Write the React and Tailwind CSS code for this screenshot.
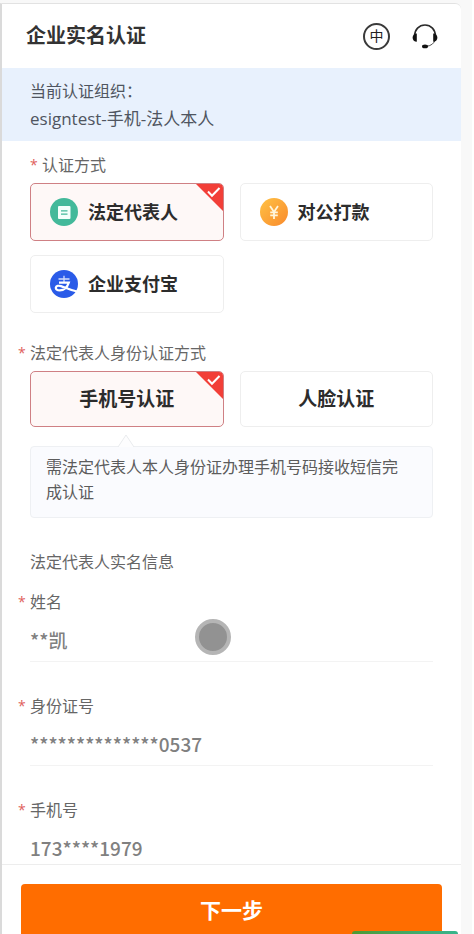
import React, { useState } from 'react';

const LEGAL_METHODS = [
    { id: 'legal', label: '法定代表人', Icon: LegalIcon },
    { id: 'transfer', label: '对公打款', Icon: TransferIcon },
    { id: 'alipay', label: '企业支付宝', Icon: AlipayIcon },
];

const IDENTITY_METHODS = [
    { id: 'phone', label: '手机号认证' },
    { id: 'face', label: '人脸认证' },
];

const FIELDS = [
    { id: 'name', label: '姓名', value: '**凯' },
    { id: 'idcard', label: '身份证号', value: '**************0537' },
    { id: 'mobile', label: '手机号', value: '173****1979' },
];

function LegalIcon() {
    return (
        <svg viewBox="0 0 28 28" className="size-7 shrink-0" aria-hidden="true">
            <circle cx="14" cy="14" r="14" fill="#43b99a" />
            <rect x="8" y="8" width="12.5" height="13" rx="1" fill="#f3fffb" />
            <path d="M11 12.8h6.5M11 16.2h6.5" stroke="#43b99a" strokeWidth="1.3" />
        </svg>
    );
}

function TransferIcon() {
    return (
        <svg viewBox="0 0 28 28" className="size-7 shrink-0" aria-hidden="true">
            <defs>
                <linearGradient id="coin" x1="0" y1="0" x2="1" y2="1">
                    <stop offset="0" stopColor="#ffc245" />
                    <stop offset="1" stopColor="#f98a2c" />
                </linearGradient>
            </defs>
            <circle cx="14" cy="14" r="14" fill="url(#coin)" />
            <path d="M10 8l4 6 4-6M14 14v7M10.2 14.4h7.6M10.2 17.4h7.6" fill="none" stroke="#fff6dc" strokeWidth="1.8" />
        </svg>
    );
}

function AlipayIcon() {
    return (
        <svg viewBox="0 0 28 28" className="size-7 shrink-0" aria-hidden="true">
            <circle cx="14" cy="14" r="14" fill="#2a5be8" />
            <g fill="none" stroke="#fff">
                <path d="M8.500 9h11M14 5.800v6.700" strokeWidth="1.300" opacity="0.800" />
                <path d="M9 12.600h9.800c-1.400 4.200-4.800 7.800-9 7.800-2.800 0-4.200-1.300-4-2.800.3-1.700 2.600-2.300 5.200-1.500 4.200 1.300 8.200 3.700 16 5.400" strokeWidth="2.200" />
            </g>
        </svg>
    );
}

function HeadsetIcon() {
    return (
        <svg viewBox="0 0 28 28" className="size-7" aria-hidden="true">
            <path d="M3.600 14C3.600 7.600 8 3 14 3s10.400 4.600 10.400 11" fill="none" stroke="#2b2b2b" strokeWidth="1.600" />
            <path d="M24.300 17.500c-1 3.800-4 6.200-8.800 6.900" fill="none" stroke="#555" strokeWidth="1" />
            <path d="M5.800 11.600v8.200c-2.400 0-4.200-1.800-4.200-4.100s1.800-4.100 4.200-4.100zM22.200 11.600v8.200c2.400 0 4.200-1.800 4.200-4.100s-1.800-4.100-4.200-4.100z" fill="#111" />
            <ellipse cx="14" cy="24.400" rx="3" ry="1.900" fill="#111" />
        </svg>
    );
}

function OptionCard({ group, option, checked, onSelect }) {
    const { id, label, Icon } = option;

    return (
        <label
            className={`relative flex items-center overflow-hidden rounded-[5px] border font-bold text-[#2c2c2c] cursor-pointer ${
                Icon ? 'h-[58px] gap-2.5 px-[19px] text-lg' : 'h-14 justify-center text-[19px]'
            } ${checked ? 'border-[#cf8084] bg-[#fef8f7]' : 'border-[#eeeeee] bg-white'}`}
        >
            <input
                type="radio"
                name={group}
                value={id}
                checked={checked}
                onChange={() => onSelect(id)}
                className="sr-only"
            />
            {Icon && <Icon />}
            <span>{label}</span>
            {checked && (
                <svg viewBox="0 0 27 27" className="absolute top-0 right-0 size-[27px]" aria-hidden="true">
                    <path d="M0 0h27v27z" fill="#f23f38" />
                    <path d="M12 7.500l4 4.200 7.500-7.700" fill="none" stroke="#fff" strokeWidth="2" />
                </svg>
            )}
        </label>
    );
}

function Required() {
    return <span className="w-3 shrink-0 text-sm leading-6 text-[#e0605c]">*</span>;
}

export default function App() {
    const [method, setMethod] = useState('legal');
    const [identity, setIdentity] = useState('phone');

    return (
        <div className="relative h-screen overflow-hidden border-r-2 border-white bg-[#f8f8f8] pt-[3px] pr-[11px] font-['Open_Sans','Noto_Sans_CJK_SC',sans-serif] text-base text-[#666666]">
            <div className="flex h-full flex-col rounded-tr-md border-t border-l-2 border-t-[#e2e2e2] border-l-[#dadada] bg-white">
                {/* Header */}
                <header className="flex h-16 shrink-0 items-center justify-between pr-[22px] pl-6">
                    <h1 className="text-xl font-bold text-[#333333]">企业实名认证</h1>
                    <div className="flex items-center gap-[21px]">
                        <button
                            type="button"
                            aria-label="切换语言"
                            className="flex size-[27px] items-center justify-center rounded-full border-2 border-[#3a3a3a] text-sm leading-none text-[#222222]"
                        >
                            中
                        </button>
                        <button type="button" aria-label="联系客服">
                            <HeadsetIcon />
                        </button>
                    </div>
                </header>

                {/* Organización actual */}
                <section className="shrink-0 bg-[#e8f1fd] px-7 pt-[9px] pb-2 leading-7 text-[#4f5560]">
                    <p>当前认证组织：</p>
                    <p className="text-[17px]">esigntest-手机-法人本人</p>
                </section>

                <main className="min-h-0 flex-1 overflow-y-auto px-7 pt-3 [scrollbar-width:none]">
                    <fieldset>
                        <legend className="flex leading-6">
                            <Required />
                            认证方式
                        </legend>
                        <div className="mt-1.5 grid grid-cols-2 gap-x-4 gap-y-3.5">
                            {LEGAL_METHODS.map((option) => (
                                <OptionCard
                                    key={option.id}
                                    group="method"
                                    option={option}
                                    checked={method === option.id}
                                    onSelect={setMethod}
                                />
                            ))}
                        </div>
                    </fieldset>

                    <fieldset className="mt-7">
                        <legend className="-ml-3 flex leading-6">
                            <Required />
                            法定代表人身份认证方式
                        </legend>
                        <div className="mt-1.5 grid grid-cols-2 gap-4">
                            {IDENTITY_METHODS.map((option) => (
                                <OptionCard
                                    key={option.id}
                                    group="identity"
                                    option={option}
                                    checked={identity === option.id}
                                    onSelect={setIdentity}
                                />
                            ))}
                        </div>
                    </fieldset>

                    {/* Tip */}
                    <div className="relative mt-[19px] rounded-sm border border-[#eef0f3] bg-[#fafbfe] pt-2 pr-5 pb-3 pl-[15px] leading-[25px] text-[#5c5c5c]">
                        <svg viewBox="0 0 18 13" className="absolute -top-[13px] left-[86px] h-[13px] w-[18px]" aria-hidden="true">
                            <path d="M1 13L9 1l8 12" fill="#fdfdfe" stroke="#e9ebee" />
                        </svg>
                        需法定代表人本人身份证办理手机号码接收短信完成认证
                    </div>

                    <h2 className="mt-8 leading-6">法定代表人实名信息</h2>

                    <div className="mt-4 flex flex-col gap-8">
                        {FIELDS.map((field) => (
                            <div key={field.id}>
                                <label htmlFor={field.id} className="-ml-3 flex leading-6">
                                    <Required />
                                    {field.label}
                                </label>
                                <input
                                    id={field.id}
                                    type="text"
                                    readOnly
                                    defaultValue={field.value}
                                    className="mt-1 block h-11 w-full border-b border-[#f3f3f3] font-['Noto_Sans_CJK_SC',sans-serif] text-[19px] font-medium text-[#808080] outline-none"
                                />
                            </div>
                        ))}
                    </div>
                </main>

                {/* Footer */}
                <footer className="-mb-1 shrink-0 border-t border-[#ededed] bg-white px-[19px] pt-[19px]">
                    <button
                        type="button"
                        className="block h-[54px] w-full rounded-[4px] bg-[#ff6d00] text-[21px] font-bold text-white"
                    >
                        下一步
                    </button>
                </footer>
            </div>

            {/* Puntero táctil */}
            <div className="pointer-events-none absolute top-[619px] left-[195px] size-9 rounded-full border-4 border-[#b5b5b5] bg-[#929292]" />
            <div className="absolute right-3.5 bottom-0 h-[3px] w-[106px] rounded-t-sm bg-gradient-to-r from-[#4c9a32] to-[#36b58c]" />
        </div>
    );
}
